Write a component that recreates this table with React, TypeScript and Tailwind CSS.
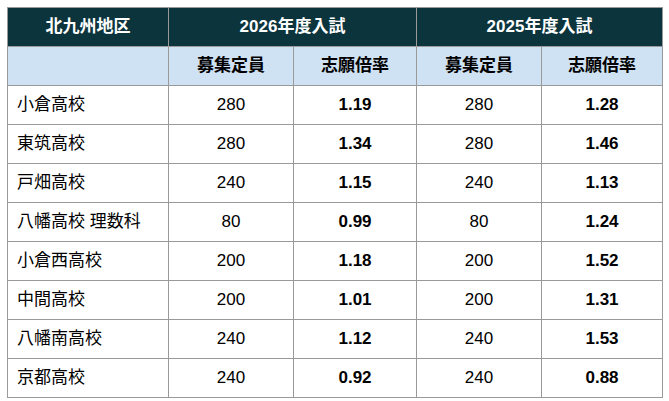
import React from "react";

const rows: [string, string, string, string, string][] = [
  ["小倉高校", "280", "1.19", "280", "1.28"],
  ["東筑高校", "280", "1.34", "280", "1.46"],
  ["戸畑高校", "240", "1.15", "240", "1.13"],
  ["八幡高校 理数科", "80", "0.99", "80", "1.24"],
  ["小倉西高校", "200", "1.18", "200", "1.52"],
  ["中間高校", "200", "1.01", "200", "1.31"],
  ["八幡南高校", "240", "1.12", "240", "1.53"],
  ["京都高校", "240", "0.92", "240", "0.88"],
];

export default function App() {
  return (
    <div
      className="w-[669px] h-[401px] bg-white pl-[7px] pt-[7px] text-[17px] text-black"
      style={{ fontFamily: '"Liberation Sans", "Noto Sans CJK JP", sans-serif' }}
    >
      <div className="grid w-[656px] grid-cols-[160px_124px_122px_124px_120px] auto-rows-[38px] gap-px bg-[#9a9a9a] p-px">
        <div className="flex items-center justify-center bg-[#0c343d] font-bold text-white">北九州地区</div>
        <div className="col-span-2 flex items-center justify-center bg-[#0c343d] font-bold text-white">2026年度入試</div>
        <div className="col-span-2 flex items-center justify-center bg-[#0c343d] font-bold text-white">2025年度入試</div>

        <div className="bg-[#cfe2f3]" />
        <div className="flex items-center justify-center bg-[#cfe2f3] font-bold">募集定員</div>
        <div className="flex items-center justify-center bg-[#cfe2f3] font-bold">志願倍率</div>
        <div className="flex items-center justify-center bg-[#cfe2f3] font-bold">募集定員</div>
        <div className="flex items-center justify-center bg-[#cfe2f3] font-bold">志願倍率</div>

        {rows.map((r) => (
          <React.Fragment key={r[0]}>
            <div className="flex items-center bg-white pl-[9px]">{r[0]}</div>
            <div className="flex items-center justify-center bg-white">{r[1]}</div>
            <div className="flex items-center justify-center bg-white font-bold">{r[2]}</div>
            <div className="flex items-center justify-center bg-white">{r[3]}</div>
            <div className="flex items-center justify-center bg-white font-bold">{r[4]}</div>
          </React.Fragment>
        ))}
      </div>
    </div>
  );
}
